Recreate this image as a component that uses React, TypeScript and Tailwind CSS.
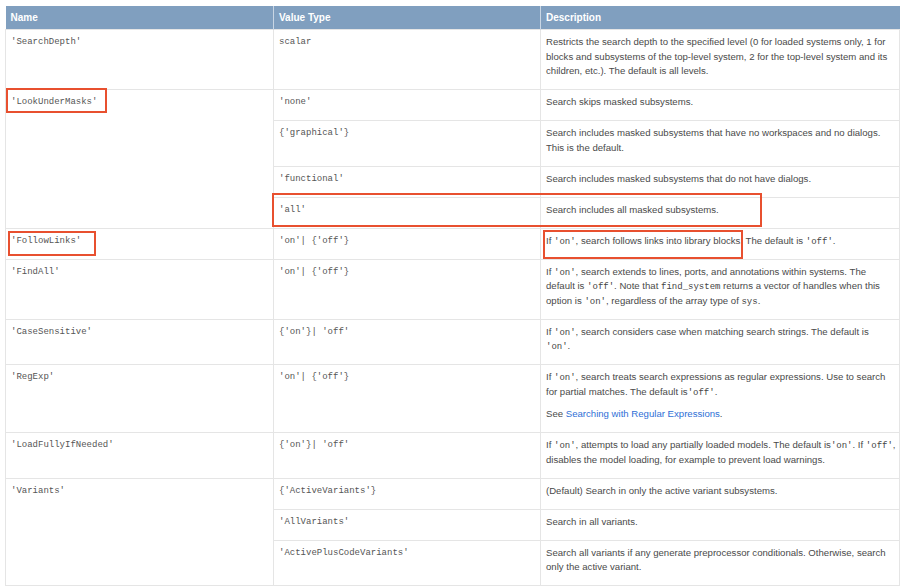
import type React from "react"

const mono = "font-['Liberation_Mono',monospace] text-[9px] text-[#555]"

function Code({ children }: { children: React.ReactNode }) {
  return <code className="font-['Liberation_Mono',monospace] text-[9px] leading-none text-[#444]">{children}</code>
}

const td = "align-top pl-[5px] pr-[3px] pt-[5px] pb-[10.5px] border border-[#e5e5e5] leading-[14.5px]"
const th = "bg-[#809fbf] text-left text-white font-bold px-[5px] py-[4px] leading-[15px] border-r border-[#c9d6e4] last:border-r-0"

function Mark({ className }: { className: string }) {
  return <div className={"absolute border-2 border-[#e8502f] " + className} />
}

export default function App() {
  return (
    <div className="relative w-[902px] h-[588px] overflow-hidden bg-white pl-[5px] pt-[6px] font-['Liberation_Sans',Arial,sans-serif] text-[9.6px] text-[#4a4a4a]">
      <table className="w-[894px] table-fixed border-collapse">
        <colgroup>
          <col className="w-[268px]" />
          <col className="w-[267px]" />
          <col className="w-[359px]" />
        </colgroup>
        <thead>
          <tr className="border-b border-[#6f8fb0] text-[10px]">
            <th className={th}>Name</th>
            <th className={th}>Value Type</th>
            <th className={th}>Description</th>
          </tr>
        </thead>
        <tbody>
          <tr>
            <td className={`${td} ${mono}`}>'SearchDepth'</td>
            <td className={`${td} ${mono}`}>scalar</td>
            <td className={td}>
              Restricts the search depth to the specified level (0 for loaded systems only, 1 for blocks and
              subsystems of the top-level system, 2 for the top-level system and its children, etc.). The default is
              all levels.
            </td>
          </tr>
          <tr>
            <td rowSpan={4} className={`${td} ${mono}`}>'LookUnderMasks'</td>
            <td className={`${td} ${mono}`}>'none'</td>
            <td className={td}>Search skips masked subsystems.</td>
          </tr>
          <tr>
            <td className={`${td} ${mono}`}>{"{'graphical'}"}</td>
            <td className={td}>
              Search includes masked subsystems that have no workspaces and no dialogs. This is the default.
            </td>
          </tr>
          <tr>
            <td className={`${td} ${mono}`}>'functional'</td>
            <td className={td}>Search includes masked subsystems that do not have dialogs.</td>
          </tr>
          <tr>
            <td className={`${td} ${mono}`}>'all'</td>
            <td className={td}>Search includes all masked subsystems.</td>
          </tr>
          <tr>
            <td className={`${td} ${mono}`}>'FollowLinks'</td>
            <td className={`${td} ${mono}`}>{"'on'| {'off'}"}</td>
            <td className={td}>
              If <Code>'on'</Code>, search follows links into library blocks. The default is <Code>'off'</Code>.
            </td>
          </tr>
          <tr>
            <td className={`${td} ${mono}`}>'FindAll'</td>
            <td className={`${td} ${mono}`}>{"'on'| {'off'}"}</td>
            <td className={td}>
              If <Code>'on'</Code>, search extends to lines, ports, and annotations within systems. The default is{" "}
              <Code>'off'</Code>. Note that <Code>find_system</Code> returns a vector of handles when this option is{" "}
              <Code>'on'</Code>, regardless of the array type of <Code>sys</Code>.
            </td>
          </tr>
          <tr>
            <td className={`${td} ${mono}`}>'CaseSensitive'</td>
            <td className={`${td} ${mono}`}>{"{'on'}| 'off'"}</td>
            <td className={td}>
              If <Code>'on'</Code>, search considers case when matching search strings. The default is
              <br />
              <Code>'on'</Code>.
            </td>
          </tr>
          <tr>
            <td className={`${td} ${mono}`}>'RegExp'</td>
            <td className={`${td} ${mono}`}>{"'on'| {'off'}"}</td>
            <td className={td}>
              <p>
                If <Code>'on'</Code>, search treats search expressions as regular expressions. Use to search for
                partial matches. The default is<Code>'off'</Code>.
              </p>
              <p className="mt-[8px]">
                See <a className="text-[#2f6fd6]">Searching with Regular Expressions</a>.
              </p>
            </td>
          </tr>
          <tr>
            <td className={`${td} ${mono}`}>'LoadFullyIfNeeded'</td>
            <td className={`${td} ${mono}`}>{"{'on'}| 'off'"}</td>
            <td className={td}>
              If <Code>'on'</Code>, attempts to load any partially loaded models. The default is<Code>'on'</Code>. If{" "}
              <Code>'off'</Code>, disables the model loading, for example to prevent load warnings.
            </td>
          </tr>
          <tr>
            <td rowSpan={3} className={`${td} ${mono}`}>'Variants'</td>
            <td className={`${td} ${mono}`}>{"{'ActiveVariants'}"}</td>
            <td className={td}>(Default) Search in only the active variant subsystems.</td>
          </tr>
          <tr>
            <td className={`${td} ${mono}`}>'AllVariants'</td>
            <td className={td}>Search in all variants.</td>
          </tr>
          <tr>
            <td className={`${td} ${mono}`}>'ActivePlusCodeVariants'</td>
            <td className={td}>
              Search all variants if any generate preprocessor conditionals. Otherwise, search only the active variant.
            </td>
          </tr>
        </tbody>
      </table>

      {/* red highlight boxes */}
      <Mark className="left-[6px] top-[88px] w-[101px] h-[25px]" />
      <Mark className="left-[272px] top-[193px] w-[490px] h-[34px]" />
      <Mark className="left-[8px] top-[231px] w-[88px] h-[25px]" />
      <Mark className="left-[543px] top-[230px] w-[200px] h-[29px]" />
    </div>
  )
}
